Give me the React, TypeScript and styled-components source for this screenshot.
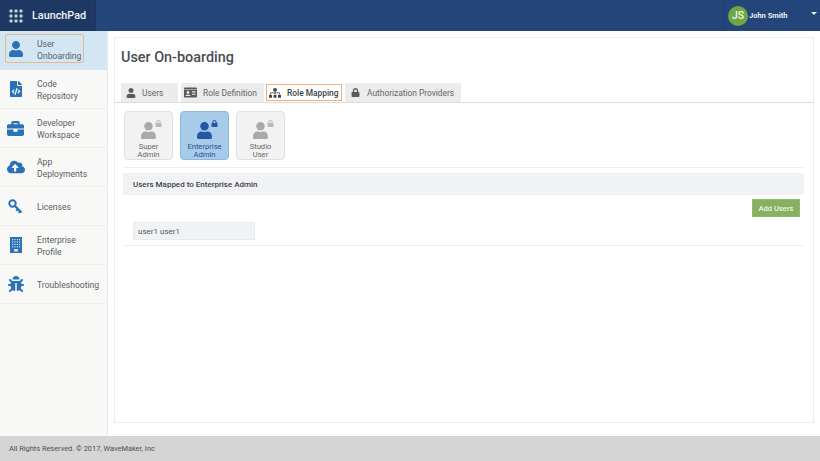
import React from "react";
import styled, { createGlobalStyle } from "styled-components";
import { FaUser, FaFileCode, FaBriefcase, FaCloudUploadAlt, FaBug, FaIdCard, FaSitemap, FaLock } from "react-icons/fa";

const Global = createGlobalStyle`
  html, body { margin: 0; padding: 0; background: #fff; }
  body { font-family: Roboto, "Liberation Sans", sans-serif; }
  * { box-sizing: border-box; }
`;

const Page = styled.div`
  width: 820px; height: 461px; display: flex; flex-direction: column; overflow: hidden; background: #fff;
`;
const Header = styled.header`
  height: 31px; display: flex; background: #234579; flex: none;
`;
const Brand = styled.div`
  width: 96px; display: flex; align-items: center; padding-left: 9px; gap: 9px; background: #1d3862;
  color: #f2f5f9; font-size: 10.8px; font-weight: 500; border-right: 1px solid #1b3560;
`;
const HeaderSpace = styled.div`flex: 1;`;
const UserBox = styled.div`
  width: 97px; display: flex; align-items: center; padding-left: 4px; border-left: 1px solid #1f3f70; position: relative;
  color: #e8eef6; font-size: 7.5px; font-weight: 700;
`;
const Avatar = styled.div`
  width: 20px; height: 20px; border-radius: 50%; background: #6fa644; color: #eef5e6; font-size: 10.5px; font-weight: 500;
  display: flex; align-items: center; justify-content: center; margin-right: 1px;
`;
const Caret = styled.span`
  position: absolute; right: 3px; top: 12px; width: 0; height: 0;
  border-left: 3px solid transparent; border-right: 3px solid transparent; border-top: 3px solid #e8eef6;
`;
const Body = styled.div`flex: 1; display: flex; min-height: 0;`;
const Sidebar = styled.nav`
  width: 108px; flex: none; background: #f8f8f7; border-right: 1px solid #e9e9e9; display: flex; flex-direction: column;
`;
const NavItem = styled.div<{ $active?: boolean }>`
  height: 39px; flex: none; display: flex; align-items: center; padding-left: ${p => (p.$active ? "5px" : "0")};
  background: ${p => (p.$active ? "#d2e7f3" : "transparent")};
  border-bottom: 1px solid ${p => (p.$active ? "#d2e7f3" : "#efefef")};
  color: #5b5f66; font-size: 8.6px; line-height: 12px;
`;
const NavInner = styled.div<{ $active?: boolean }>`
  display: flex; align-items: center; height: ${p => (p.$active ? "29px" : "auto")};
  width: ${p => (p.$active ? "79px" : "auto")};
  border: ${p => (p.$active ? "1px solid #e8b88e" : "none")};
  border-radius: 2px;
  margin-top: ${p => (p.$active ? "-3px" : "0")};
`;
const NavIcon = styled.span<{ $active?: boolean }>`
  width: ${p => (p.$active ? "31px" : "37px")}; padding-right: ${p => (p.$active ? "11px" : "6px")};
  display: flex; justify-content: center; color: #2a72b5; font-size: 16px; flex: none;
`;
const NavLabel = styled.span`padding-top: 2px;`;
const Main = styled.main`flex: 1; padding: 6px 6px 13px; min-width: 0;`;
const Panel = styled.section`
  height: 100%; border: 1px solid #ececec; padding-top: 10px; display: flex; flex-direction: column;
`;
const Title = styled.h1`
  margin: 0 0 0 6px; font-size: 14.4px; line-height: 20px; font-weight: 500; color: #4a4d52;
`;
const Tabs = styled.div`
  margin-top: 15px; height: 20px; display: flex; padding-left: 6px; border-bottom: 1px solid #dcdcdc; flex: none; align-items: flex-start;
`;
const Tab = styled.div<{ $active?: boolean; $w: number; $gap: number; $pad: number }>`
  width: ${p => p.$w}px; height: ${p => (p.$active ? "17px" : "19px")}; display: flex; align-items: center;
  padding-left: ${p => p.$pad}px; gap: ${p => p.$gap}px;
  background: ${p => (p.$active ? "#fff" : "#ececec")};
  border: ${p => (p.$active ? "1px solid #f3b07a" : "none")};
  margin: ${p => (p.$active ? "1px 3px 0 -1px" : "0 3px 0 0")};
  color: ${p => (p.$active ? "#3c3f44" : "#63666b")}; font-size: 8.4px; font-weight: ${p => (p.$active ? 500 : 400)};
  white-space: nowrap;
  svg { flex: none; color: ${p => (p.$active ? "#444" : "#5a5a5a")}; }
`;
const Roles = styled.div`display: flex; gap: 7px; padding: 8px 0 0 9px; flex: none;`;
const Role = styled.div<{ $active?: boolean }>`
  width: 49px; height: 49px; border-radius: 4px; border: 1px solid ${p => (p.$active ? "#8db6dd" : "#dfdfdf")};
  background: ${p => (p.$active ? "#a9cbea" : "#f2f2f2")};
  color: ${p => (p.$active ? "#23508f" : "#666")};
  display: flex; flex-direction: column; align-items: center; font-size: 7.6px; line-height: 8px; text-align: center;
  padding-top: 8px;
`;
const RoleIcon = styled.div<{ $active?: boolean }>`
  position: relative; height: 20px; width: 20px; margin-bottom: 4px; font-size: 17px; display: flex; justify-content: center; align-items: flex-end;
  color: ${p => (p.$active ? "#2457a6" : "#aaa")};
`;
const Lock = styled.span<{ $active?: boolean }>`
  position: absolute; right: -3px; top: 0; font-size: 7px; line-height: 1;
  color: ${p => (p.$active ? "#2457a6" : "#bbb")};
`;
const Rule = styled.div<{ $top: number }>`height: 1px; background: #efefef; margin: ${p => p.$top}px 9px 0 8px; flex: none;`;
const SectionHead = styled.div`
  margin: 5px 9px 0 8px; height: 22px; background: #f1f2f3; display: flex; align-items: center; padding-left: 10px;
  color: #3f4247; font-size: 8px; font-weight: 500; flex: none;
`;
const Actions = styled.div`display: flex; justify-content: flex-end; padding: 4px 13px 0 0; flex: none;`;
const AddButton = styled.button`
  width: 48px; height: 18px; border: 1px solid #93b96f; background: #88b061; color: #eef4e6; font: 500 7.6px Roboto, sans-serif; padding: 0;
`;
const UserChip = styled.div`
  margin: 5px 0 0 18px; width: 122px; height: 18px; background: #f1f2f3; border: 1px solid #e9eaeb; padding-left: 4px;
  display: flex; align-items: center; font-size: 8px; color: #55585d; flex: none;
`;
const Footer = styled.footer`
  height: 25px; flex: none; background: #d5d5d5; color: #4c4f55; font-size: 7.4px; display: flex; align-items: center; padding-left: 9px;
`;

const Dots = () => (
  <svg width="14" height="14" viewBox="0 0 14 14" fill="#c3ccd9">
    {[2, 7, 12].flatMap(y => [2, 7, 12].map(x => <circle key={`${x}-${y}`} cx={x} cy={y} r="1.7" />))}
  </svg>
);
const Building = () => (
  <svg width="12" height="16" viewBox="0 0 12 16">
    <rect width="12" height="16" fill="#2a72b5" />
    <g fill="#cfe0f0">
      {[2, 4.4, 6.8, 9.2].flatMap(y => [2, 4.4, 6.8, 9].map(x => <rect key={`${x}-${y}`} x={x} y={y} width="1.2" height="1.2" />))}
    </g>
    <rect x="4" y="12" width="4" height="2.5" fill="#cfe0f0" />
  </svg>
);
const KeyIcon = () => (
  <svg width="15" height="15" viewBox="0 0 15 15" fill="none" stroke="#2a72b5">
    <circle cx="4.5" cy="4.5" r="3.2" strokeWidth="2" />
    <path d="M7 7l6.5 6.5M10 10l-1.8 1.8M12.2 12.2l-1.6 1.6" strokeWidth="2" />
  </svg>
);

const items: { icon: React.ReactNode; label: React.ReactNode; active?: boolean }[] = [
  { icon: <FaUser />, label: <>User<br />Onboarding</>, active: true },
  { icon: <FaFileCode />, label: <>Code<br />Repository</> },
  { icon: <FaBriefcase size={17} />, label: <>Developer<br />Workspace</> },
  { icon: <FaCloudUploadAlt size={18} />, label: <>App<br />Deployments</> },
  { icon: <KeyIcon />, label: "Licenses" },
  { icon: <Building />, label: <>Enterprise<br />Profile</> },
  { icon: <FaBug />, label: "Troubleshooting" },
];
const roles = [
  { a: "Super", b: "Admin" },
  { a: "Enterprise", b: "Admin", active: true },
  { a: "Studio", b: "User" },
];

export default function App() {
  return (
    <Page>
      <Global />
      <Header>
        <Brand><Dots />LaunchPad</Brand>
        <HeaderSpace />
        <UserBox><Avatar>JS</Avatar>John Smith<Caret /></UserBox>
      </Header>
      <Body>
        <Sidebar>
          {items.map((it, i) => (
            <NavItem key={i} $active={it.active}>
              <NavInner $active={it.active}>
                <NavIcon $active={it.active}>{it.icon}</NavIcon>
                <NavLabel>{it.label}</NavLabel>
              </NavInner>
            </NavItem>
          ))}
        </Sidebar>
        <Main>
          <Panel>
            <Title>User On-boarding</Title>
            <Tabs>
              <Tab $w={57} $gap={4} $pad={5}><FaUser size={10} />&nbsp;Users</Tab>
              <Tab $w={83} $gap={6} $pad={3}><FaIdCard size={13} />Role Definition</Tab>
              <Tab $w={76} $gap={6} $pad={2} $active><FaSitemap size={12} />Role Mapping</Tab>
              <Tab $w={116} $gap={7} $pad={6}><FaLock size={9} />Authorization Providers</Tab>
            </Tabs>
            <Roles>
              {roles.map(r => (
                <Role key={r.a} $active={r.active}>
                  <RoleIcon $active={r.active}><FaUser /><Lock $active={r.active}><FaLock /></Lock></RoleIcon>
                  <span>{r.a}<br />{r.b}</span>
                </Role>
              ))}
            </Roles>
            <Rule $top={7} />
            <SectionHead>Users Mapped to Enterprise Admin</SectionHead>
            <Actions><AddButton>Add Users</AddButton></Actions>
            <UserChip>user1 user1</UserChip>
            <Rule $top={5} />
          </Panel>
        </Main>
      </Body>
      <Footer>All Rights Reserved. © 2017, WaveMaker, Inc</Footer>
    </Page>
  );
}
